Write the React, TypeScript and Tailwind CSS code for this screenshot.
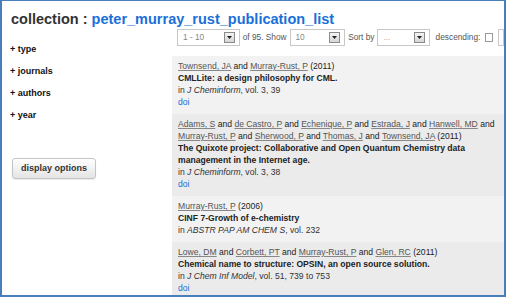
import { ReactNode } from 'react'

type Entry = {
  authors: string[]
  year: string
  title: string
  journal: string
  rest: string
  doi?: boolean
}

const entries: Entry[] = [
  {
    authors: ['Townsend, JA', 'Murray-Rust, P'],
    year: '2011',
    title: 'CMLLite: a design philosophy for CML.',
    journal: 'J Cheminform',
    rest: ', vol. 3, 39',
    doi: true,
  },
  {
    authors: ['Adams, S', 'de Castro, P', 'Echenique, P', 'Estrada, J', 'Hanwell, MD', 'Murray-Rust, P', 'Sherwood, P', 'Thomas, J', 'Townsend, JA'],
    year: '2011',
    title: 'The Quixote project: Collaborative and Open Quantum Chemistry data management in the Internet age.',
    journal: 'J Cheminform',
    rest: ', vol. 3, 38',
    doi: true,
  },
  {
    authors: ['Murray-Rust, P'],
    year: '2006',
    title: 'CINF 7-Growth of e-chemistry',
    journal: 'ABSTR PAP AM CHEM S',
    rest: ', vol. 232',
  },
  {
    authors: ['Lowe, DM', 'Corbett, PT', 'Murray-Rust, P', 'Glen, RC'],
    year: '2011',
    title: 'Chemical name to structure: OPSIN, an open source solution.',
    journal: 'J Chem Inf Model',
    rest: ', vol. 51, 739 to 753',
    doi: true,
  },
]

function Select({ value, width, muted }: { value: string; width: string; muted?: boolean }) {
  return (
    <div className={`flex items-center justify-between h-[17px] border border-[#c8c8c8] bg-white pl-[5px] pr-[4px] ${width}`}>
      <span className={muted ? 'text-[#b0b0b0]' : 'text-[#888]'}>{value}</span>
      <span className="flex items-center justify-center w-[11px] h-[11px] border border-[#8a8a8a] bg-gradient-to-b from-[#f4f4f4] to-[#d6d6d6]">
        <svg width="5" height="3" viewBox="0 0 5 3">
          <path d="M0 0h5L2.5 3z" fill="#222" />
        </svg>
      </span>
    </div>
  )
}

function AuthorLine({ authors, year }: { authors: string[]; year: string }) {
  const parts: ReactNode[] = []
  authors.forEach((a, i) => {
    if (i > 0) parts.push(<span key={`and${i}`}> and </span>)
    parts.push(
      <a key={a} className="text-[#555] underline decoration-[#888]">
        {a}
      </a>
    )
  })
  return (
    <div>
      {parts} ({year})
    </div>
  )
}

export default function App() {
  return (
    <div
      className="w-[506px] h-[297px] overflow-hidden bg-white border-t border-l-2 border-r-2 border-b-2 border-[#4a7ebb] text-[#222] flex flex-col"
      style={{ fontFamily: '"Liberation Sans", Arial, sans-serif' }}
    >
      {/* Title */}
      <div className="pl-[9px] pt-[9px] text-[14.5px] font-bold leading-[18px] whitespace-nowrap">
        <span className="text-[#333]">collection : </span>
        <span className="text-[#1a6fd8]">peter_murray_rust_publication_list</span>
      </div>

      <div className="flex flex-1 min-h-0">
        {/* Sidebar */}
        <div className="w-[170px] shrink-0 pl-[8px] text-[9px] font-bold text-[#111]">
          <div className="flex flex-col gap-[9px] pt-[15px]">
            <div className="leading-[13px]">+ type</div>
            <div className="leading-[13px]">+ journals</div>
            <div className="leading-[13px]">+ authors</div>
            <div className="leading-[13px]">+ year</div>
          </div>
          <button className="mt-[36px] ml-[2px] w-[84px] h-[21px] rounded-[3px] border border-[#c4c4c4] bg-gradient-to-b from-white to-[#e4e4e4] text-[9px] font-bold text-[#333] shadow-[0_1px_1px_rgba(0,0,0,0.08)]">
            display options
          </button>
        </div>

        {/* Main */}
        <div className="flex-1 min-w-0 flex flex-col text-[8.6px]">
          <div className="flex items-center gap-[3px] pl-[5px] pt-[1px] pb-[10px] whitespace-nowrap text-[#555] text-[8.3px]">
            <Select value="1 - 10" width="w-[70px]" />
            <span>of 95. Show</span>
            <Select value="10" width="w-[62px]" />
            <span>Sort by</span>
            <Select value="..." width="w-[58px]" muted />
            <span className="ml-[3px]">descending:</span>
            <span className="ml-[2px] w-[9px] h-[9px] border border-[#999] bg-white" />
            <span className="ml-[2px] w-[6px] h-[17px] border border-[#c8c8c8] bg-white" />
          </div>

          <div className="flex-1 flex flex-col leading-[12px]">
            {entries.map((e, i) => (
              <div
                key={i}
                className={`pl-[6px] pr-[4px] pt-[4px] pb-[6px] ${i % 2 === 0 ? 'bg-[#f2f2f2]' : 'bg-[#ebebeb]'}`}
              >
                <AuthorLine authors={e.authors} year={e.year} />
                <div className="font-bold text-[#222]">{e.title}</div>
                <div className="text-[#333]">
                  in <i>{e.journal}</i>
                  {e.rest}
                </div>
                {e.doi && <div className="text-[#1a6fd8]">doi</div>}
              </div>
            ))}
          </div>
        </div>
      </div>
    </div>
  )
}
